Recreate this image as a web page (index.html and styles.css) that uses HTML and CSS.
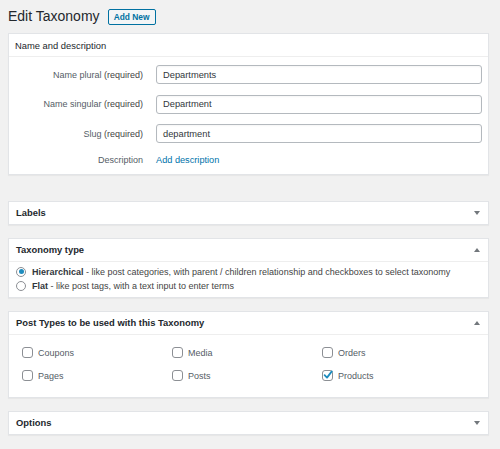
FILE: index.html
```html
<!DOCTYPE html>
<html>
<head>
<meta charset="utf-8">
<link rel="stylesheet" href="styles.css">
</head>
<body>
<div class="wrap">
  <div class="title-row">
    <h1>Edit Taxonomy</h1>
    <a class="add-new">Add New</a>
  </div>

  <div class="box box-main">
    <div class="box-head plain">Name and description</div>
    <div class="form">
      <div class="row"><span class="lbl">Name plural <span class="req">(required)</span></span><span class="input">Departments</span></div>
      <div class="row"><span class="lbl">Name singular <span class="req">(required)</span></span><span class="input">Department</span></div>
      <div class="row"><span class="lbl">Slug <span class="req">(required)</span></span><span class="input">department</span></div>
      <div class="row row-desc"><span class="lbl">Description</span><a class="link">Add description</a></div>
    </div>
  </div>

  <div class="box box-labels">
    <div class="box-head no-border"><span>Labels</span><span class="arrow down"></span></div>
  </div>

  <div class="box">
    <div class="box-head"><span>Taxonomy type</span><span class="arrow up"></span></div>
    <div class="radios">
      <div class="radio-row"><span class="radio on"></span><span><b>Hierarchical</b> - like post categories, with parent / children relationship and checkboxes to select taxonomy</span></div>
      <div class="radio-row"><span class="radio"></span><span><b>Flat</b> - like post tags, with a text input to enter terms</span></div>
    </div>
  </div>

  <div class="box">
    <div class="box-head"><span>Post Types to be used with this Taxonomy</span><span class="arrow up"></span></div>
    <div class="checks">
      <div class="check"><span class="cb"></span>Coupons</div>
      <div class="check"><span class="cb"></span>Media</div>
      <div class="check"><span class="cb"></span>Orders</div>
      <div class="check"><span class="cb"></span>Pages</div>
      <div class="check"><span class="cb"></span>Posts</div>
      <div class="check"><span class="cb on"><svg viewBox="0 0 12 12" width="12" height="12"><path d="M2.6 6.2 L5 8.6 L9.8 2.4" fill="none" stroke="#1e8cbe" stroke-width="1.8" stroke-linecap="round" stroke-linejoin="round"/></svg></span>Products</div>
    </div>
  </div>

  <div class="box">
    <div class="box-head no-border"><span>Options</span><span class="arrow down"></span></div>
  </div>
</div>
</body>
</html>
```

FILE: styles.css
```css
html, body {
  margin: 0;
  background: #f1f1f1;
}
body {
  font-family: "Liberation Sans", Arial, sans-serif;
  color: #444;
  font-size: 9px;
}
.wrap {
  padding: 8px 11px 0 8px;
}
.title-row {
  display: flex;
  align-items: center;
  gap: 8px;
  height: 17px;
  margin-bottom: 8px;
}
h1 {
  margin: 0;
  font-size: 14px;
  font-weight: 400;
  line-height: 17px;
  color: #23282d;
}
.add-new {
  display: flex;
  align-items: center;
  box-sizing: border-box;
  height: 16px;
  width: 48px;
  justify-content: center;
  border: 1px solid #0071a1;
  border-radius: 2px;
  background: #f3f5f6;
  color: #0071a1;
  font-size: 8.4px;
  font-weight: 700;
}
.box {
  background: #fff;
  border: 1px solid #e2e4e7;
  box-shadow: 0 1px 1px rgba(0, 0, 0, 0.04);
  margin-bottom: 13px;
}
.box-main {
  margin-bottom: 26px;
}
.box-head {
  display: flex;
  align-items: center;
  justify-content: space-between;
  height: 22px;
  padding: 0 8px 0 7px;
  border-bottom: 1px solid #eee;
  font-size: 9.4px;
  font-weight: 700;
  color: #23282d;
}
.box-head.plain {
  font-weight: 400;
  padding-left: 6px;
}
.box-head.no-border {
  border-bottom: none;
}
.arrow {
  width: 0;
  height: 0;
  border-left: 3px solid transparent;
  border-right: 3px solid transparent;
}
.arrow.down {
  border-top: 4px solid #72777c;
}
.arrow.up {
  border-bottom: 4px solid #72777c;
}
.form {
  padding: 8px 6px 8px 0;
  display: flex;
  flex-direction: column;
  gap: 10.5px;
}
.row {
  display: grid;
  grid-template-columns: 134px 1fr;
  column-gap: 13px;
  align-items: center;
}
.lbl {
  text-align: right;
  color: #555d66;
  font-size: 9px;
}
.req {
  color: #444;
}
.input {
  box-sizing: border-box;
  height: 19px;
  border: 1px solid #b4b9be;
  border-radius: 3px;
  padding: 0 6px;
  display: flex;
  align-items: center;
  color: #32373c;
  font-size: 9.3px;
  box-shadow: inset 0 1px 2px rgba(0, 0, 0, 0.04);
}
.row-desc {
  height: 12px;
}
.link {
  color: #0073aa;
  font-size: 9.2px;
}
.radios {
  padding: 3px 7px 4px 7px;
  display: flex;
  flex-direction: column;
}
.radio-row {
  display: flex;
  align-items: center;
  gap: 6px;
  height: 14px;
  font-size: 9px;
  color: #444;
}
.radio-row b {
  color: #32373c;
}
.radio {
  box-sizing: border-box;
  width: 10px;
  height: 10px;
  border-radius: 50%;
  border: 1px solid #8c8f94;
  background: #fff;
  display: flex;
  align-items: center;
  justify-content: center;
}
.radio.on::after {
  content: "";
  width: 5px;
  height: 5px;
  border-radius: 50%;
  background: #1e8cbe;
}
.checks {
  display: grid;
  grid-template-columns: 150px 150px 150px;
  row-gap: 11px;
  padding: 12px 0 15px 13px;
}
.check {
  display: flex;
  align-items: center;
  gap: 5px;
  height: 12px;
  font-size: 9px;
  color: #555d66;
}
.cb {
  box-sizing: border-box;
  width: 11px;
  height: 11px;
  border: 1px solid #8c8f94;
  border-radius: 3px;
  background: #fff;
  position: relative;
  flex: none;
}
.cb svg {
  position: absolute;
  left: -1px;
  top: -2px;
}
```
